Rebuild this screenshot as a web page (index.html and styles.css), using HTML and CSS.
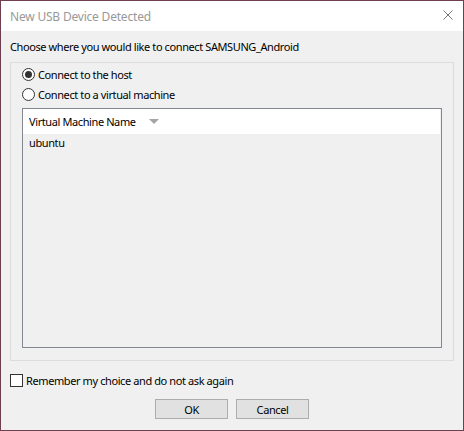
FILE: index.html
```html
<!DOCTYPE html>
<html lang="en">
<head>
    <meta charset="UTF-8">
    <title>New USB Device Detected</title>
    <link rel="stylesheet" href="styles.css">
</head>
<body>
    <div class="window">
        <div class="titlebar">
            <span class="title">New USB Device Detected</span>
            <svg class="close" width="10" height="10" viewBox="0 0 10 10">
                <path d="M0.5 0.5 L9.5 9.5 M9.5 0.5 L0.5 9.5" stroke="#777" stroke-width="1" fill="none"/>
            </svg>
        </div>
        <div class="content">
            <p class="prompt">Choose where you would like to connect SAMSUNG_Android</p>
            <div class="group">
                <label class="option"><span class="radio checked"></span>Connect to the host</label>
                <label class="option"><span class="radio"></span>Connect to a virtual machine</label>
                <div class="list">
                    <div class="list-header">
                        <span>Virtual Machine Name</span>
                        <span class="sort-arrow"></span>
                    </div>
                    <div class="list-item">ubuntu</div>
                </div>
            </div>
            <label class="remember"><span class="checkbox"></span>Remember my choice and do not ask again</label>
            <div class="buttons">
                <button class="btn">OK</button>
                <button class="btn">Cancel</button>
            </div>
        </div>
    </div>
</body>
</html>
```

FILE: styles.css
```css
body {
    margin: 0;
    font-family: "Noto Sans", "Open Sans", sans-serif;
    font-size: 11px;
    letter-spacing: -0.4px;
    color: #000;
    background: #fff;
}

.window {
    width: 464px;
    height: 431px;
    box-sizing: border-box;
    border: 1px solid #6f3f51;
    background-color: #f0f0f0;
}

.titlebar {
    height: 30px;
    background-color: #fff;
    display: flex;
    align-items: center;
    justify-content: space-between;
    padding: 0 10px 0 9px;
}

.title {
    color: #999;
    font-size: 12px;
    letter-spacing: -0.2px;
}

.close {
    margin-top: -2px;
}

.content {
    padding: 0 9px;
}

.prompt {
    margin: 0;
    height: 31px;
    line-height: 31px;
}

.group {
    height: 299px;
    box-sizing: border-box;
    border: 1px solid #dcdcdc;
    padding: 5px 11px 0 11px;
}

.option {
    display: flex;
    align-items: center;
    height: 13px;
    margin-bottom: 7px;
    line-height: 13px;
}

.radio {
    width: 13px;
    height: 13px;
    box-sizing: border-box;
    border: 1px solid #333;
    border-radius: 50%;
    background: #fff;
    margin-right: 3px;
    display: flex;
    align-items: center;
    justify-content: center;
}

.radio.checked::after {
    content: "";
    width: 7px;
    height: 7px;
    border-radius: 50%;
    background: #333;
}

.list {
    height: 240px;
    box-sizing: border-box;
    border: 1px solid #828790;
}

.list-header {
    height: 25px;
    margin-right: 1px;
    background: #fff;
    display: flex;
    align-items: center;
    padding-left: 6px;
}

.sort-arrow {
    width: 0;
    height: 0;
    margin-left: 13px;
    border-left: 5px solid transparent;
    border-right: 5px solid transparent;
    border-top: 5px solid #a5a5a5;
}

.list-item {
    padding-left: 6px;
    height: 17px;
    line-height: 17px;
}

.remember {
    display: flex;
    align-items: center;
    margin-top: 12px;
    height: 15px;
}

.checkbox {
    width: 13px;
    height: 13px;
    box-sizing: border-box;
    border: 1px solid #333;
    background: #fff;
    margin-right: 3px;
}

.buttons {
    display: flex;
    justify-content: center;
    gap: 8px;
    margin-top: 11px;
}

.btn {
    width: 73px;
    height: 20px;
    padding: 0;
    font-family: inherit;
    font-size: 11px;
    letter-spacing: -0.4px;
    color: #000;
    background: #e1e1e1;
    border: 1px solid #adadad;
    border-radius: 0;
}
```
